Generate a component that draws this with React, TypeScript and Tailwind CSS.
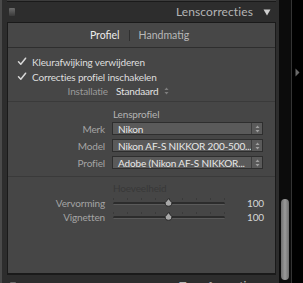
import React from "react";

const font = { fontFamily: "Lato, 'Liberation Sans', sans-serif" };

function Check() {
  return (
    <svg width="10" height="9" viewBox="0 0 10 9" className="shrink-0">
      <path d="M1.5 4.8 L3.8 7.2 L8.6 1.2" fill="none" stroke="#d8d8d8" strokeWidth="1.5" strokeLinecap="round" strokeLinejoin="round" />
    </svg>
  );
}

function UpDown({ color = "#8a8a8a" }: { color?: string }) {
  return (
    <svg width="5" height="8" viewBox="0 0 5 8">
      <path d="M2.5 0.5 L4.5 3 L0.5 3 Z" fill={color} />
      <path d="M2.5 7.5 L4.5 5 L0.5 5 Z" fill={color} />
    </svg>
  );
}

function Select({ text }: { text: string }) {
  return (
    <div className="flex h-[13px] w-[151px] items-stretch border border-[#2e2e2e] bg-[#5a5a5a]">
      <div className="flex flex-1 items-center overflow-hidden whitespace-nowrap pl-[5px] text-[10px] leading-none tracking-[-0.15px] text-[#e8e8e8]">
        {text}
      </div>
      <div className="flex w-[11px] items-center justify-center border-l border-[#3c3c3c]">
        <UpDown color="#a0a0a0" />
      </div>
    </div>
  );
}

function Slider({ pos }: { pos: number }) {
  const ticks = [0, 1, 2, 3, 4, 5, 6, 7, 8];
  return (
    <div className="relative h-[14px] w-[112px]">
      {ticks.map((t) => (
        <div
          key={t}
          className="absolute top-[2px] h-[2px] w-px bg-[#3a3a3a]"
          style={{ left: `${Math.round((t * 111) / 8)}px` }}
        />
      ))}
      <div className="absolute left-0 right-0 top-[6px] h-[3px] rounded-full border-b border-[#5a5a5a] bg-[#2c2c2c]" />
      <svg
        width="9"
        height="9"
        viewBox="0 0 9 9"
        className="absolute top-[2px]"
        style={{ left: `${pos - 4}px` }}
      >
        <path d="M4.5 0.6 L7.8 4.6 Q8.2 8.2 4.5 8.2 Q0.8 8.2 1.2 4.6 Z" fill="#a8a8a8" stroke="#1e1e1e" strokeWidth="0.9" />
      </svg>
    </div>
  );
}

export default function App() {
  return (
    <div className="flex h-[283px] w-[303px] overflow-hidden bg-black" style={font}>
      {/* left panel column */}
      <div className="flex w-[279px] shrink-0 flex-col overflow-hidden border-l-2 border-[#4a4a4a] bg-[#2d2d2d] pl-[5px] pr-[3px]">
        {/* previous panel bottom */}
        <div className="h-px shrink-0 bg-[#3c3c3c]" />
        <div className="h-px shrink-0 bg-[#1a1a1a]" />
        {/* header */}
        <div className="flex h-[20px] shrink-0 items-center">
          <div className="ml-[2px] h-[8px] w-[6px] rounded-[1px] bg-gradient-to-b from-[#6c6c6c] to-[#3a3a3a]" />
          <div className="ml-auto text-[12px] leading-none tracking-[0.1px] text-[#b4b4b4]">Lenscorrecties</div>
          <svg width="8" height="7" viewBox="0 0 8 7" className="ml-[10px] mr-[5px]">
            <path d="M0.5 0.5 L7.5 0.5 L4 6.5 Z" fill="#cfcfcf" />
          </svg>
        </div>
        {/* box */}
        <div className="flex h-[253px] shrink-0 flex-col border border-b-2 border-[#1a1a1a] bg-[#464646]">
          {/* tabs */}
          <div className="flex h-[25px] shrink-0 items-center justify-center border-b border-[#2e2e2e] bg-[#474747] pr-[4px] text-[10.5px] leading-none">
            <span className="text-[#ececec]">Profiel</span>
            <span className="mx-[9px] h-[11px] w-px bg-[#2f2f2f]" />
            <span className="text-[#b8b8b8]">Handmatig</span>
          </div>
          {/* content */}
          <div className="flex flex-col text-[10px] leading-none tracking-[-0.15px]">
            <div className="mt-[6px] flex h-[15px] items-center pl-[9px]">
              <Check />
              <span className="ml-[5px] text-[#dedede]">Kleurafwijking verwijderen</span>
            </div>
            <div className="flex h-[15px] items-center pl-[9px]">
              <Check />
              <span className="ml-[5px] text-[#dedede]">Correcties profiel inschakelen</span>
            </div>
            <div className="flex h-[13px] items-center">
              <span className="w-[100px] text-right text-[#9a9a9a]">Installatie</span>
              <span className="ml-[8px] text-[#e2e2e2]">Standaard</span>
              <span className="ml-[5px] flex items-center">
                <UpDown color="#7e7e7e" />
              </span>
            </div>
            <div className="mt-[4px] h-px bg-[#3a3a3a]" />
            <div className="mt-[6px] flex h-[12px] items-center">
              <span className="ml-[105px] text-[#b4b4b4]">Lensprofiel</span>
            </div>
            <div className="mt-[2px] flex h-[13px] items-center">
              <span className="w-[97px] text-right text-[#a4a4a4]">Merk</span>
              <span className="ml-[7px]">
                <Select text="Nikon" />
              </span>
            </div>
            <div className="mt-[4px] flex h-[13px] items-center">
              <span className="w-[97px] text-right text-[#a4a4a4]">Model</span>
              <span className="ml-[7px]">
                <Select text="Nikon AF-S NIKKOR 200-500..." />
              </span>
            </div>
            <div className="mt-[4px] flex h-[13px] items-center">
              <span className="w-[97px] text-right text-[#a4a4a4]">Profiel</span>
              <span className="ml-[7px]">
                <Select text="Adobe (Nikon AF-S NIKKOR..." />
              </span>
            </div>
            <div className="mt-[7px] h-px bg-[#3a3a3a]" />
            <div className="mt-[5px] flex h-[12px] items-center">
              <span className="ml-[105px] text-[#383838]">Hoeveelheid</span>
            </div>
            <div className="mt-[2px] flex h-[14px] items-center">
              <span className="w-[97px] text-right text-[#a4a4a4]">Vervorming</span>
              <span className="ml-[8px]">
                <Slider pos={55} />
              </span>
              <span className="ml-auto mr-[11px] text-[#d6d6d6]">100</span>
            </div>
            <div className="flex h-[14px] items-center">
              <span className="w-[97px] text-right text-[#a4a4a4]">Vignetten</span>
              <span className="ml-[8px]">
                <Slider pos={55} />
              </span>
              <span className="ml-auto mr-[11px] text-[#d6d6d6]">100</span>
            </div>
          </div>
        </div>
        {/* next header (clipped) */}
        <div className="mt-px flex h-[20px] shrink-0 items-center">
          <div className="ml-[3px] h-[8px] w-[6px] rounded-[1px] bg-gradient-to-b from-[#6c6c6c] to-[#3a3a3a]" />
          <div className="ml-auto text-[12px] leading-none tracking-[0.1px] text-[#b4b4b4]">Transformatie</div>
          <svg width="8" height="7" viewBox="0 0 8 7" className="ml-[10px] mr-[5px]">
            <path d="M0.5 0.5 L7.5 0.5 L4 6.5 Z" fill="#cfcfcf" />
          </svg>
        </div>
      </div>
      {/* scrollbar track */}
      <div className="flex w-[12px] shrink-0 flex-col bg-[#0c0c0c] pl-[2px]">
        <div className="mt-[199px] h-[81px] w-[8px] shrink-0 rounded-full bg-gradient-to-r from-[#6e6e6e] via-[#9a9a9a] to-[#6e6e6e]" />
      </div>
      {/* right strip */}
      <div className="flex w-[12px] shrink-0 flex-col items-center border-l border-[#333] bg-black pt-[68px]">
        <svg width="5" height="9" viewBox="0 0 5 9">
          <path d="M0.5 0.5 L4.5 4.5 L0.5 8.5 Z" fill="#6a6a6a" />
        </svg>
      </div>
    </div>
  );
}
